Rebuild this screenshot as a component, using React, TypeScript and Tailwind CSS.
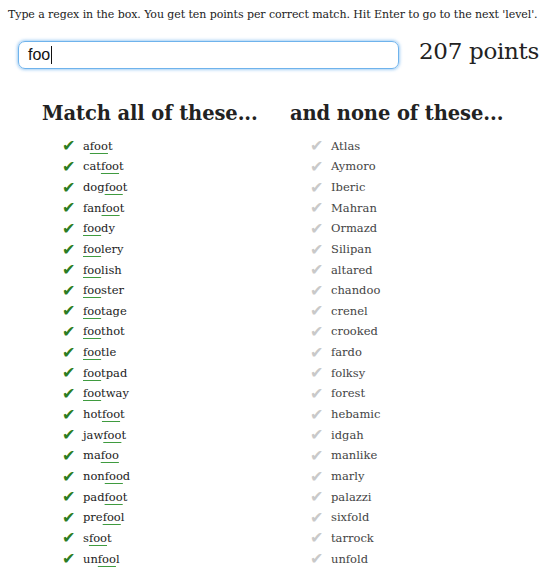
const matches = [
  "afoot", "catfoot", "dogfoot", "fanfoot", "foody", "foolery", "foolish", "fooster",
  "footage", "foothot", "footle", "footpad", "footway", "hotfoot", "jawfoot", "mafoo",
  "nonfood", "padfoot", "prefool", "sfoot", "unfool",
];

const nonMatches = [
  "Atlas", "Aymoro", "Iberic", "Mahran", "Ormazd", "Silipan", "altared", "chandoo",
  "crenel", "crooked", "fardo", "folksy", "forest", "hebamic", "idgah", "manlike",
  "marly", "palazzi", "sixfold", "tarrock", "unfold",
];

function Word({ word, re }: { word: string; re: string }) {
  const i = word.indexOf(re);
  if (i < 0) return <span>{word}</span>;
  return (
    <span>
      {word.slice(0, i)}
      <span className="underline decoration-[#3f9b3f] underline-offset-[3px] decoration-1">
        {word.slice(i, i + re.length)}
      </span>
      {word.slice(i + re.length)}
    </span>
  );
}

export default function App() {
  const re = "foo";
  return (
    <div className="w-[560px] h-[588px] bg-white text-[#222] font-['DejaVu_Serif',serif] overflow-hidden">
      <p className="pl-[8px] pt-[8px] text-[11px] leading-[14px] tracking-[-0.08px]">
        Type a regex in the box. You get ten points per correct match. Hit Enter to go to the next 'level'.
      </p>

      <div className="flex items-center pl-[18px] mt-[19px]">
        <div className="w-[381px] h-[28px] rounded-[7px] border border-[#6fb3ec] shadow-[0_0_3px_1px_rgba(90,165,235,0.55)] flex items-center px-[9px] font-['Liberation_Sans',sans-serif] text-[16px] text-[#111]">
          {re}
          <span className="w-px h-[18px] bg-[#111] ml-[1px]" />
        </div>
        <div className="ml-[20px] text-[23px] leading-none tracking-[-0.3px] -mt-[8px]">207 points</div>
      </div>

      <div className="flex pl-[42px] mt-[33px]">
        <div className="w-[248px]">
          <h2 className="font-bold text-[19.5px] leading-[24px] tracking-[-0.1px]">Match all of these...</h2>
          <ul className="pl-[20px] mt-[10px] text-[11.5px]">
            {matches.map((w) => (
              <li key={w} className="flex items-center h-[20.65px]">
                <span className="w-[21px] text-[#2c7d22] text-[16px] leading-none">✔</span>
                <Word word={w} re={re} />
              </li>
            ))}
          </ul>
        </div>
        <div>
          <h2 className="font-bold text-[19.5px] leading-[24px] tracking-[-0.1px]">and none of these...</h2>
          <ul className="pl-[20px] mt-[10px] text-[11.5px] text-[#444]">
            {nonMatches.map((w) => (
              <li key={w} className="flex items-center h-[20.65px]">
                <span className="w-[21px] text-[#c9c9c9] text-[16px] leading-none">✔</span>
                <span>{w}</span>
              </li>
            ))}
          </ul>
        </div>
      </div>
    </div>
  );
}
